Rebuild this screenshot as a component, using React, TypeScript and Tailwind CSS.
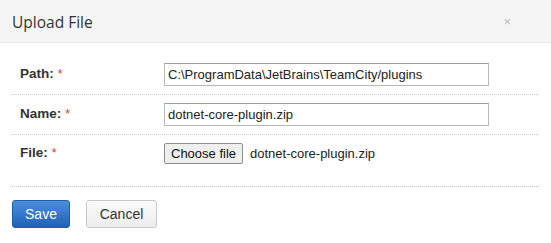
import React from "react";

function Row({ label, children, last }: { label: string; children: React.ReactNode; last?: boolean }) {
  return (
    <div className={`flex items-center border-b border-dotted border-[#c8c8c8] ${last ? "pt-[8px] pb-[22px]" : "py-2"}`}>
      <div className="w-[152px] pl-2 text-[13.5px] font-bold text-[#333]">
        {label}: <span className="text-[#d0453e] font-normal">*</span>
      </div>
      {children}
    </div>
  );
}

export default function App() {
  return (
    <div className="w-[551px] h-[243px] bg-white" style={{ fontFamily: '"Liberation Sans", Arial, sans-serif' }}>
      <div className="h-[43px] flex items-center justify-between px-3 bg-[#f5f5f5] border-b border-[#e6e6e6]">
        <span className="text-[15.5px] text-[#333] pt-[3px]" style={{ fontFamily: '"Open Sans", "Noto Sans", sans-serif' }}>
          Upload File
        </span>
        <span className="text-[13px] text-[#b5b5b5] mr-[28px] leading-none">×</span>
      </div>

      <div className="mx-3 pt-3">
        <Row label="Path">
          <input
            readOnly
            value="C:\ProgramData\JetBrains\TeamCity/plugins"
            className="w-[325px] h-[23px] px-[3px] text-[13px] text-[#222] border border-[#b9b9b9] border-t-[#9e9e9e] outline-none"
          />
        </Row>
        <Row label="Name">
          <input
            readOnly
            value="dotnet-core-plugin.zip"
            className="w-[325px] h-[23px] px-[3px] text-[13px] text-[#222] border border-[#b9b9b9] border-t-[#9e9e9e] outline-none"
          />
        </Row>
        <Row label="File" last>
          <div className="flex items-center">
            <span className="h-[21px] px-[6px] flex items-center text-[13px] text-[#111] bg-[#efefef] border border-[#8f8f8f] rounded-[2px]">
              Choose file
            </span>
            <span className="ml-[7px] text-[13px] text-[#222]">dotnet-core-plugin.zip</span>
          </div>
        </Row>

        <div className="flex gap-4 pt-[13px]">
          <button className="w-[58px] h-[28px] text-[14px] text-white rounded-[3px] border border-[#1f5cad] bg-gradient-to-b from-[#4c8edb] to-[#1f61b8]">
            Save
          </button>
          <button className="w-[71px] h-[28px] text-[14px] text-[#333] rounded-[3px] border border-[#c9c9c9] bg-gradient-to-b from-[#fafafa] to-[#ededed]">
            Cancel
          </button>
        </div>
      </div>
    </div>
  );
}
